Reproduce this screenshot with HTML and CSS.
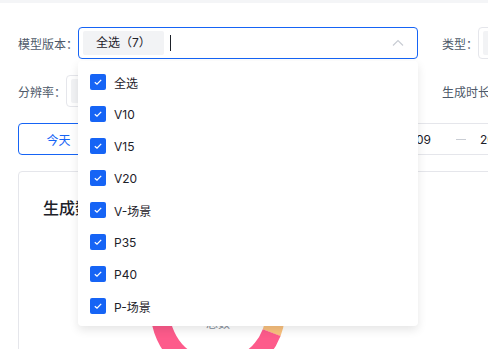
FILE: index.html
```html
<!DOCTYPE html>
<html lang="zh-CN">
<head>
  <meta charset="UTF-8" />
  <meta name="viewport" content="width=device-width, initial-scale=1.0" />
  <title>生成数据统计</title>
  <link rel="stylesheet" href="styles.css">
</head>
<body>
  <div class="panel">
    <div class="filters">
      <div class="field">
        <span class="field-label">模型版本：</span>
        <div class="select is-open">
          <span class="tag">全选（7）</span>
          <span class="caret"></span>
          <svg class="arrow" width="12" height="12" viewBox="0 0 12 12"><path d="M1 8.5 L6 3.5 L11 8.5" fill="none" stroke="#c9cdd4" stroke-width="1.2"/></svg>

          <div class="dropdown">
            <div class="option"><span class="checkbox"><svg width="16" height="16" viewBox="0 0 16 16"><path d="M4.8 8.2 L7 10.2 L11.2 5.9" fill="none" stroke="#fff" stroke-width="1.3"/></svg></span>全选</div>
            <div class="option"><span class="checkbox"><svg width="16" height="16" viewBox="0 0 16 16"><path d="M4.8 8.2 L7 10.2 L11.2 5.9" fill="none" stroke="#fff" stroke-width="1.3"/></svg></span>V10</div>
            <div class="option"><span class="checkbox"><svg width="16" height="16" viewBox="0 0 16 16"><path d="M4.8 8.2 L7 10.2 L11.2 5.9" fill="none" stroke="#fff" stroke-width="1.3"/></svg></span>V15</div>
            <div class="option"><span class="checkbox"><svg width="16" height="16" viewBox="0 0 16 16"><path d="M4.8 8.2 L7 10.2 L11.2 5.9" fill="none" stroke="#fff" stroke-width="1.3"/></svg></span>V20</div>
            <div class="option"><span class="checkbox"><svg width="16" height="16" viewBox="0 0 16 16"><path d="M4.8 8.2 L7 10.2 L11.2 5.9" fill="none" stroke="#fff" stroke-width="1.3"/></svg></span>V-场景</div>
            <div class="option"><span class="checkbox"><svg width="16" height="16" viewBox="0 0 16 16"><path d="M4.8 8.2 L7 10.2 L11.2 5.9" fill="none" stroke="#fff" stroke-width="1.3"/></svg></span>P35</div>
            <div class="option"><span class="checkbox"><svg width="16" height="16" viewBox="0 0 16 16"><path d="M4.8 8.2 L7 10.2 L11.2 5.9" fill="none" stroke="#fff" stroke-width="1.3"/></svg></span>P40</div>
            <div class="option"><span class="checkbox"><svg width="16" height="16" viewBox="0 0 16 16"><path d="M4.8 8.2 L7 10.2 L11.2 5.9" fill="none" stroke="#fff" stroke-width="1.3"/></svg></span>P-场景</div>
          </div>
        </div>
      </div>

      <div class="field">
        <span class="field-label">类型：</span>
        <div class="select">
          <span class="tag">全选（3）</span>
        </div>
      </div>

      <div class="field">
        <span class="field-label">分辨率：</span>
        <div class="select">
          <span class="tag">全选（4）</span>
        </div>
      </div>

      <div class="field">
        <span class="field-label">生成时长：</span>
        <div class="select">
          <span class="tag">全选（5）</span>
        </div>
      </div>
    </div>

    <div class="toolbar">
      <div class="radio-group">
        <button class="radio active" type="button">今天</button>
        <button class="radio" type="button">近7天</button>
        <button class="radio" type="button">近30天</button>
        <button class="radio" type="button">自定义</button>
      </div>
      <div class="range">
        <span class="range-start">2024-05-09</span>
        <span class="range-sep"></span>
        <span class="range-end">2024-05-16</span>
      </div>
    </div>

    <div class="card">
      <h2 class="card-title">生成数量统计</h2>
      <svg class="donut" width="350" height="180" viewBox="0 0 350 180">
        <!-- circumference of r=57.5 is 361.28 -->
        <circle cx="175" cy="84" r="57.5" fill="none" stroke="#4c8bf5" stroke-width="19" stroke-dasharray="120.4 361.28" transform="rotate(200 175 84)"/>
        <circle cx="175" cy="84" r="57.5" fill="none" stroke="#f9c17e" stroke-width="19" stroke-dasharray="61.2 361.28" transform="rotate(-40 175 84)"/>
        <circle cx="175" cy="84" r="57.5" fill="none" stroke="#fd5b8b" stroke-width="19" stroke-dasharray="179.6 361.28" transform="rotate(21 175 84)"/>
        <text x="175" y="80" text-anchor="middle" class="donut-value">1,286</text>
        <text x="175" y="100" text-anchor="middle" class="donut-label">总数</text>
      </svg>
    </div>
  </div>
</body>
</html>
```

FILE: styles.css
```css
html, body {
  overflow: hidden;
}

body {
  margin: 0;
  font-family: Inter, "Noto Sans CJK SC", sans-serif;
  font-size: 12px;
  color: #1d2129;
  background-color: #f4f5f7;
}

.panel {
  margin-top: 3px;
  width: 900px;
  min-height: 400px;
  padding: 24px 18px;
  background-color: #fff;
  box-sizing: border-box;
}

.filters {
  display: grid;
  grid-template-columns: 400px 400px;
  column-gap: 24px;
  row-gap: 16px;
}

.field {
  display: flex;
  align-items: center;
}

.field-label {
  color: #4e5969;
  white-space: nowrap;
}

.select {
  position: relative;
  flex: 1;
  height: 32px;
  padding: 0 4px;
  display: flex;
  align-items: center;
  gap: 6px;
  border: 1px solid #e5e6eb;
  border-radius: 4px;
  box-sizing: border-box;
  background-color: #fff;
}

.select.is-open {
  border-color: #1664f5;
}

.tag {
  height: 24px;
  line-height: 24px;
  padding: 0 13px;
  border-radius: 2px;
  background-color: #f2f3f5;
  color: #1d2129;
}

.caret {
  width: 1px;
  height: 16px;
  background-color: #1d2129;
}

.arrow {
  margin-left: auto;
  margin-right: 9px;
}

.dropdown {
  position: absolute;
  top: calc(100% + 3px);
  left: -1px;
  width: calc(100% + 2px);
  padding: 5px 0 4px;
  background-color: #fff;
  border-radius: 4px;
  box-shadow: 0 4px 10px rgba(0, 0, 0, 0.1);
  box-sizing: border-box;
  z-index: 10;
}

.option {
  height: 32px;
  padding-left: 12px;
  display: flex;
  align-items: center;
  gap: 8px;
  color: #1d2129;
}

.checkbox {
  width: 16px;
  height: 16px;
  border-radius: 2px;
  background-color: #1664f5;
  display: flex;
}

.toolbar {
  display: flex;
  align-items: center;
  margin-top: 16px;
}

.radio-group {
  display: flex;
}

.radio {
  width: 81px;
  height: 32px;
  padding: 0;
  font: inherit;
  color: #4e5969;
  background-color: #fff;
  border: 1px solid #e5e6eb;
  border-left: none;
}

.radio:first-child {
  border-left: 1px solid #e5e6eb;
  border-radius: 4px 0 0 4px;
}

.radio:last-child {
  border-radius: 0 4px 4px 0;
}

.radio.active {
  color: #1664f5;
  border: 1px solid #1664f5;
  border-radius: 4px;
}

.range {
  margin-left: 4px;
  height: 32px;
  padding: 0 12px;
  display: flex;
  align-items: center;
  border: 1px solid #e5e6eb;
  border-radius: 4px;
  box-sizing: border-box;
  width: 260px;
}

.range-start {
  width: 72px;
  text-align: right;
  white-space: nowrap;
}

.range-sep {
  width: 10px;
  height: 1px;
  margin: 0 14px 0 25px;
  background-color: #c9cdd4;
}

.range-end {
  white-space: nowrap;
}

.card {
  margin-top: 16px;
  padding: 24px;
  border: 1px solid #e5e6eb;
  border-radius: 4px;
  height: 400px;
}

.card-title {
  margin: 0;
  font-size: 16px;
  line-height: 24px;
  font-weight: 500;
  color: #1d2129;
}

.donut {
  display: block;
  margin-top: 8px;
}

.donut-value {
  font-size: 20px;
  font-weight: 600;
  fill: #1d2129;
}

.donut-label {
  font-size: 12px;
  fill: #86909c;
}
```
